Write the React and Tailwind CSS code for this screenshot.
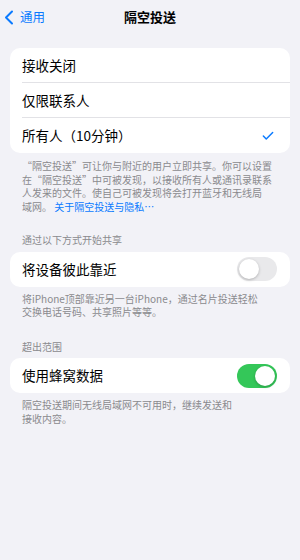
import { Check } from "lucide-react";

function Toggle({ on }) {
  return (
    <div
      className={
        on
          ? "w-[40px] h-[24px] rounded-full bg-[#34c759] p-[2px] flex justify-end"
          : "w-[40px] h-[24px] rounded-full bg-[#e9e9eb] p-[2px] flex justify-start"
      }
    >
      <div className="w-[20px] h-[20px] rounded-full bg-white shadow-[0_1px_3px_rgba(0,0,0,0.25)]" />
    </div>
  );
}

function Row({ label, right, divider }) {
  return (
    <div className="h-[35px] pl-[12px] flex">
      <div
        className={
          divider
            ? "flex-1 flex items-center justify-between pr-[13px] border-b border-[#e2e2e6]"
            : "flex-1 flex items-center justify-between pr-[13px]"
        }
      >
        <span className="text-[13.5px] text-black">{label}</span>
        {right}
      </div>
    </div>
  );
}

export default function App() {
  return (
    <div
      className="w-[300px] h-[560px] bg-[#f2f2f7] overflow-hidden"
      style={{ fontFamily: '"Noto Sans CJK SC", sans-serif' }}
    >
      {/* nav */}
      <div className="h-[33px] relative flex items-center justify-center">
        <div className="absolute left-[4px] top-[10px] flex items-center gap-[6px] text-[#0a7aff]">
          <svg width="10" height="15" viewBox="0 0 10 15" fill="none">
            <path d="M8 1.5 L2 7.5 L8 13.5" stroke="#0a7aff" strokeWidth="2" strokeLinecap="round" strokeLinejoin="round" />
          </svg>
          <span className="text-[12.5px] leading-none">通用</span>
        </div>
        <span className="text-[13px] font-semibold text-black">隔空投送</span>
      </div>

      <div className="px-[10px] pt-[15px]">
        <div className="bg-white rounded-[10px]">
          <Row label="接收关闭" divider />
          <Row label="仅限联系人" divider />
          <Row
            label="所有人（10分钟）"
            right={<Check className="w-[14px] h-[14px] text-[#0a7aff] mr-[2px]" strokeWidth={2.5} />}
          />
        </div>

        <p className="mt-[6px] px-[12px] text-[10px] leading-[13.5px] text-[#8a8a8e] whitespace-nowrap">
          “隔空投送”可让你与附近的用户立即共享。你可以设置
          <br />
          在“隔空投送”中可被发现，以接收所有人或通讯录联系
          <br />
          人发来的文件。使自己可被发现将会打开蓝牙和无线局
          <br />
          域网。 <span className="text-[#0a7aff]">关于隔空投送与隐私…</span>
        </p>

        <p className="mt-[20px] px-[12px] text-[10px] leading-[13.5px] text-[#8a8a8e]">
          通过以下方式开始共享
        </p>
        <div className="mt-[5px] bg-white rounded-[10px]">
          <Row label="将设备彼此靠近" right={<Toggle on={false} />} />
        </div>
        <p className="mt-[5px] px-[12px] text-[10px] leading-[13.5px] text-[#8a8a8e] whitespace-nowrap">
          将iPhone顶部靠近另一台iPhone，通过名片投送轻松
          <br />
          交换电话号码、共享照片等等。
        </p>

        <p className="mt-[21px] px-[12px] text-[10px] leading-[13.5px] text-[#8a8a8e]">
          超出范围
        </p>
        <div className="mt-[5px] bg-white rounded-[10px]">
          <Row label="使用蜂窝数据" right={<Toggle on />} />
        </div>
        <p className="mt-[5px] px-[12px] text-[10px] leading-[13.5px] text-[#8a8a8e] whitespace-nowrap">
          隔空投送期间无线局域网不可用时，继续发送和
          <br />
          接收内容。
        </p>
      </div>
    </div>
  );
}
